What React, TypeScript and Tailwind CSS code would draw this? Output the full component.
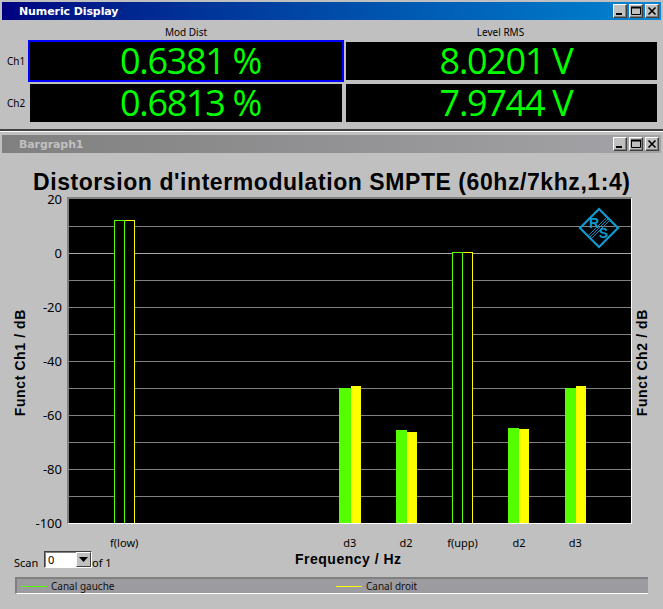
const ui = { fontFamily: '"Noto Sans", "Liberation Sans", sans-serif' };

function WinButtons() {
  const btn =
    "w-[14px] h-[14px] bg-[#c0c0c0] border border-t-white border-l-white border-r-[#404040] border-b-[#404040] shadow-[inset_-1px_-1px_0_#808080] flex items-center justify-center";
  return (
    <div className="flex gap-[2px] mr-[2px]">
      <div className={btn}>
        <svg width="12" height="12" viewBox="0 0 12 12">
          <rect x="2" y="8" width="6" height="2" fill="#000" />
        </svg>
      </div>
      <div className={btn}>
        <svg width="12" height="12" viewBox="0 0 12 12">
          <path d="M1.5 2.5h9v7h-9zM1.5 2.5h9" fill="none" stroke="#000" />
          <rect x="1" y="1.5" width="10" height="2" fill="#000" />
        </svg>
      </div>
      <div className={btn}>
        <svg width="12" height="12" viewBox="0 0 12 12">
          <path d="M2.5 2.5l7 7M9.5 2.5l-7 7" stroke="#000" strokeWidth="1.6" />
        </svg>
      </div>
    </div>
  );
}

function TitleBar({ title, active }: { title: string; active: boolean }) {
  return (
    <div
      className={`h-[18px] flex items-center justify-between bg-gradient-to-r ${
        active ? "from-[#000080] to-[#1084d0] text-white" : "from-[#808080] to-[#a4a4a8] text-[#c0c0c0]"
      }`}
    >
      <span
        className="pl-[17px] text-[11px] font-bold leading-none"
        style={{ fontFamily: '"DejaVu Sans", sans-serif', letterSpacing: "-0.1px" }}
      >
        {title}
      </span>
      <WinButtons />
    </div>
  );
}

function Value({ text, selected }: { text: string; selected?: boolean }) {
  return (
    <div
      className={`h-[42px] bg-black flex items-center justify-center pl-[9px] text-[#00ff00] text-[36px] leading-none ${
        selected ? "border-2 border-[#0000ff]" : "border-2 border-[#c0c0c0]"
      }`}
    >
      <span style={{ fontFamily: '"Open Sans", sans-serif', letterSpacing: "-1.3px" }}>{text}</span>
    </div>
  );
}

const GRID = [226, 253, 280, 307, 334, 361, 388, 415, 442, 469, 496];
const BARS = [
  { x: 124, w: 10, top: 220, c: "#ffff00", outline: true },
  { x: 114, w: 10, top: 220, c: "#55ff00", outline: true },
  { x: 339, w: 12, top: 388, c: "#55ff00" },
  { x: 351, w: 10, top: 386, c: "#ffff00" },
  { x: 396, w: 11, top: 430, c: "#55ff00" },
  { x: 407, w: 10, top: 432, c: "#ffff00" },
  { x: 462, w: 10, top: 252, c: "#ffff00", outline: true },
  { x: 452, w: 10, top: 252, c: "#55ff00", outline: true },
  { x: 508, w: 11, top: 428, c: "#55ff00" },
  { x: 519, w: 10, top: 429, c: "#ffff00" },
  { x: 565, w: 11, top: 388, c: "#55ff00" },
  { x: 576, w: 10, top: 386, c: "#ffff00" },
];

function Plot() {
  const ox = 69;
  const oy = 199;
  return (
    <svg width="562" height="324" viewBox="0 0 562 324" className="block">
      <rect width="562" height="324" fill="#000" />
      {GRID.map((y) => (
        <line
          key={y}
          x1="0"
          x2="562"
          y1={y - oy + 0.5}
          y2={y - oy + 0.5}
          stroke={y === 253 ? "#a8a8a8" : "#808080"}
        />
      ))}
      {BARS.map((b, i) =>
        b.outline ? (
          <rect
            key={i}
            x={b.x - ox + 0.5}
            y={b.top - oy + 0.5}
            width={b.w}
            height={523 - b.top}
            fill="#000"
            stroke={b.c}
          />
        ) : (
          <rect key={i} x={b.x - ox} y={b.top - oy} width={b.w} height={524 - b.top} fill={b.c} />
        ),
      )}
      <g transform="translate(530 29)">
        <path d="M0 -19L19 0L0 19L-19 0Z" fill="none" stroke="#0f9ad0" strokeWidth="2.2" />
        <text x="-5" y="0" textAnchor="middle" fontSize="14" fontWeight="bold" fill="#0f9ad0" fontFamily="Liberation Sans">
          R
        </text>
        <text x="4.5" y="10" textAnchor="middle" fontSize="14" fontWeight="bold" fill="#0f9ad0" fontFamily="Liberation Sans">
          S
        </text>
        <path d="M-9 9L9 -9M-7.5 10.5L10.5 -7.5M-10.5 7.5L7.5 -10.5" stroke="#0f9ad0" strokeWidth="0.9" />
      </g>
    </svg>
  );
}

const TICKS = ["20", "0", "-20", "-40", "-60", "-80"];
const XLABELS = ["f(low)", "", "", "", "d3", "d2", "f(upp)", "d2", "d3"];
const axis = { fontFamily: '"Liberation Sans", sans-serif', letterSpacing: "0.6px" };

function Chart() {
  return (
    <div className="flex h-[328px] mt-[2px]">
      <div className="relative w-[67px] shrink-0">
        <div className="absolute left-[13px] top-[1px] h-[326px] flex items-center">
          <span
            className="[writing-mode:vertical-rl] rotate-180 text-[14px] font-bold text-black leading-[14px] pb-[4px]"
            style={axis}
          >
            Funct Ch1 / dB
          </span>
        </div>
        <div className="absolute right-[5px] top-[-6px] flex flex-col items-end text-[13px] leading-[16px] text-black">
          {TICKS.map((t) => (
            <div key={t} className="h-[54px]">
              {t}
            </div>
          ))}
          <div className="h-[16px]">-100</div>
        </div>
      </div>
      <div className="border-2 border-t-[#808080] border-l-[#808080] border-r-white border-b-white border-b-[1px] border-r-[1px] w-[565px] h-[327px] shrink-0">
        <Plot />
      </div>
      <div className="flex-1 flex items-center justify-start">
        <span
          className="[writing-mode:vertical-rl] rotate-180 text-[14px] font-bold text-black leading-[14px] pb-[4px] ml-[3px]"
          style={axis}
        >
          Funct Ch2 / dB
        </span>
      </div>
    </div>
  );
}

export default function App() {
  return (
    <div className="w-[663px] h-[609px] overflow-hidden bg-[#c0c0c0] pt-[2px]" style={ui}>
      <div className="mx-[2px]">
        <TitleBar title="Numeric Display" active />
        <div className="h-[20px] flex text-[10px] text-black leading-none items-center pt-[3px] pl-[26px]">
          <div className="w-[316px] text-center">Mod Dist</div>
          <div className="w-[313px] text-center">Level RMS</div>
        </div>
        <div className="flex items-center">
          <div className="w-[26px] pl-[5px] text-[10px] leading-none text-black">Ch1</div>
          <div className="w-[316px]">
            <Value text="0.6381 %" selected />
          </div>
          <div className="w-[315px]">
            <Value text="8.0201 V" />
          </div>
        </div>
        <div className="flex items-center">
          <div className="w-[26px] pl-[5px] text-[10px] leading-none text-black">Ch2</div>
          <div className="w-[316px]">
            <Value text="0.6813 %" />
          </div>
          <div className="w-[315px]">
            <Value text="7.9744 V" />
          </div>
        </div>
      </div>
      <div className="mt-[5px] h-[3px] border-t-2 border-t-[#404040] border-b border-b-white" />
      <div className="mt-[3px] mx-[2px]">
        <TitleBar title="Bargraph1" active={false} />
      </div>
      <div
        className="mt-[16px] ml-[33px] h-[26px] text-[23px] font-bold leading-[26px] text-black whitespace-nowrap"
        style={{ fontFamily: '"Liberation Sans", sans-serif', letterSpacing: "0.57px" }}
      >
        Distorsion d'intermodulation SMPTE (60hz/7khz,1:4)
      </div>
      <Chart />
      <div className="flex ml-[96px] mt-[11px] h-[14px] text-[11px] leading-[14px] text-black">
        {XLABELS.map((l, i) => (
          <div key={i} className="w-[56.4px] text-center">
            {l}
          </div>
        ))}
      </div>
      <div className="flex items-center h-[19px] mt-[0px] ml-[14px] relative">
        <span className="text-[11px] leading-none text-black w-[30px] pt-[6px]">Scan</span>
        <div className="w-[48px] h-[17px] bg-white border border-t-[#404040] border-l-[#404040] border-r-white border-b-white shadow-[inset_1px_1px_0_#808080] flex justify-between items-center">
          <span className="text-[11px] leading-none text-black pl-[3px]">0</span>
          <div className="w-[15px] h-[15px] bg-[#c0c0c0] border border-t-white border-l-white border-r-[#404040] border-b-[#404040] flex items-center justify-center">
            <svg width="9" height="5" viewBox="0 0 9 5">
              <path d="M0 0h9L4.5 5z" fill="#000" />
            </svg>
          </div>
        </div>
        <span className="text-[11px] leading-none text-black pt-[6px]">of 1</span>
        <span
          className="absolute left-[281px] top-[0px] text-[14px] font-bold leading-[18px] text-black"
          style={{ ...axis, letterSpacing: "0.5px" }}
        >
          Frequency / Hz
        </span>
      </div>
      <div className="mt-[8px] mx-[15px] h-[17px] bg-[#9c9ca0] border-2 border-t-[#808080] border-l-[#808080] border-r-[#c0c0c0] border-b-white border-b-[1px] border-r-0 flex items-center text-[10px] leading-none text-[#101010] w-[633px]">
        <div className="w-[26px] h-px bg-[#55ff00] ml-[4px] mr-[4px]" />
        <span className="w-[285px]">Canal gauche</span>
        <div className="w-[26px] h-px bg-[#ffff00] mr-[4px]" />
        <span>Canal droit</span>
      </div>
    </div>
  );
}
